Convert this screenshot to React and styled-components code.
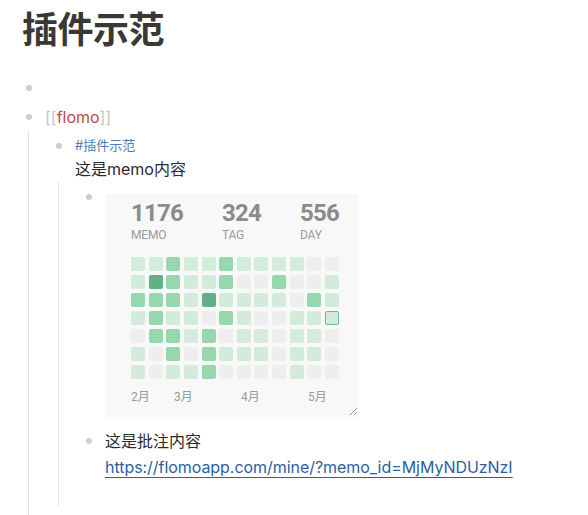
import React from "react";
import styled, { createGlobalStyle } from "styled-components";

const GlobalStyle = createGlobalStyle`
  html, body { margin: 0; padding: 0; background: #ffffff; overflow: hidden; }
  body {
    font-family: Inter, "Noto Sans CJK SC", sans-serif;
    color: #2f2f2f;
    -webkit-font-smoothing: antialiased;
  }
`;

const Page = styled.div`
  padding: 8px 0 0 22px;
  width: 588px;
  height: 515px;
  box-sizing: border-box;
  overflow: hidden;
`;

const Title = styled.h1`
  margin: 0;
  font-size: 36px;
  line-height: 44px;
  font-weight: 700;
  color: #3a3834;
  font-family: Inter, "Noto Sans CJK SC", sans-serif;
  letter-spacing: -0.5px;
`;

const Outline = styled.div`
  margin-top: 21px;
`;

const Block = styled.div`
  display: flex;
  flex-direction: column;
`;

const Row = styled.div`
  display: flex;
  align-items: flex-start;
  gap: 9px;
  padding: 2px 0 1px;
`;

const BulletWrap = styled.div`
  width: 14px;
  height: 26px;
  flex: none;
  display: flex;
  align-items: center;
  justify-content: center;
`;

const Dot = styled.span`
  width: 6px;
  height: 6px;
  border-radius: 50%;
  background: #cdcdcd;
`;

const Content = styled.div`
  display: flex;
  flex-direction: column;
  min-height: 26px;
`;

const Line = styled.div`
  font-size: 16px;
  line-height: ${(p) => p.$lh || 26}px;
  color: #2b2b2b;
  white-space: nowrap;
`;

const Children = styled.div`
  margin-left: 6px;
  border-left: 1px solid #e4e4e4;
  padding-left: 23px;
  padding-bottom: ${(p) => p.$pb || 0}px;
`;

const Bracket = styled.span`
  color: #c4c4c4;
`;

const PageRef = styled.span`
  color: #bd4a4a;
`;

const Tag = styled.span`
  font-size: 13px;
  line-height: 23px;
  color: #4a7db3;
`;

const Link = styled.a`
  color: #2d5f9c;
  text-decoration: underline;
  text-decoration-thickness: 1px;
  text-underline-offset: 4px;
  letter-spacing: -0.05px;
`;

/* ---- flomo card ---- */

const Card = styled.div`
  position: relative;
  margin: 10px 0 8px;
  width: 254px;
  height: 223px;
  box-sizing: border-box;
  background: #f8f8f8;
  padding: 5px 20px 10px 26px;
  font-family: Roboto, "Noto Sans CJK SC", sans-serif;
`;

const Stats = styled.div`
  display: flex;
  justify-content: space-between;
  width: 208px;
`;

const Stat = styled.div`
  display: flex;
  flex-direction: column;
`;

const StatNum = styled.div`
  font-size: 24px;
  line-height: 28px;
  font-weight: 700;
  color: #8b8b8b;
  letter-spacing: -0.8px;
`;

const StatLabel = styled.div`
  font-size: 12px;
  line-height: 16px;
  color: #9a9a9a;
  letter-spacing: -0.2px;
`;

const Heatmap = styled.div`
  margin-top: 14px;
  width: 208px;
  display: grid;
  grid-template-columns: repeat(12, 1fr);
  grid-auto-rows: 14px;
  column-gap: 3.7px;
  row-gap: 4px;
`;

const levelColors = ["#eeeeee", "#d3ebdb", "#97d7ad", "#62b085"];

const Cell = styled.div`
  border-radius: 2px;
  background: ${(p) => levelColors[p.$level]};
  box-sizing: border-box;
  border: ${(p) => (p.$today ? "1px solid #6dbb8a" : "none")};
`;

const Months = styled.div`
  position: relative;
  margin-top: 10px;
  height: 16px;
  width: 208px;
`;

const Month = styled.span`
  position: absolute;
  top: 0;
  left: ${(p) => p.$left}px;
  font-size: 12px;
  line-height: 16px;
  color: #9a9a9a;
`;

const Grip = styled.svg`
  position: absolute;
  right: 1px;
  bottom: 1px;
`;

const rows = [
  [1, 1, 2, 1, 1, 2, 1, 1, 1, 1, 0, 0],
  [1, 3, 2, 1, 1, 2, 0, 0, 2, 0, 0, 1],
  [2, 2, 2, 1, 3, 1, 1, 1, 1, 0, 2, 1],
  [1, 2, 1, 1, 0, 2, 1, 0, 0, 1, 1, 1],
  [0, 2, 2, 1, 2, 0, 1, 1, 0, 1, 1, 0],
  [1, 0, 2, 0, 2, 1, 1, 1, 0, 1, 1, 0],
  [1, 0, 1, 1, 2, 0, 0, 0, 0, 1, 0, 0],
];

const months = [
  { label: "2月", left: 0 },
  { label: "3月", left: 43 },
  { label: "4月", left: 110 },
  { label: "5月", left: 177 },
];

const stats = [
  { num: "1176", label: "MEMO" },
  { num: "324", label: "TAG" },
  { num: "556", label: "DAY" },
];

function FlomoCard() {
  return (
    <Card>
      <Stats>
        {stats.map((s) => (
          <Stat key={s.label}>
            <StatNum>{s.num}</StatNum>
            <StatLabel>{s.label}</StatLabel>
          </Stat>
        ))}
      </Stats>
      <Heatmap>
        {rows.map((r, ri) =>
          r.map((lv, ci) => (
            <Cell key={`${ri}-${ci}`} $level={lv} $today={ri === 3 && ci === 11} />
          ))
        )}
      </Heatmap>
      <Months>
        {months.map((m) => (
          <Month key={m.label} $left={m.left}>
            {m.label}
          </Month>
        ))}
      </Months>
      <Grip width="9" height="9" viewBox="0 0 9 9">
        <line x1="1" y1="8" x2="8" y2="1" stroke="#8a8a8a" strokeWidth="0.9" />
        <line x1="5" y1="8" x2="8" y2="5" stroke="#8a8a8a" strokeWidth="0.9" />
      </Grip>
    </Card>
  );
}

function Bullet() {
  return (
    <BulletWrap>
      <Dot />
    </BulletWrap>
  );
}

export default function App() {
  return (
    <>
      <GlobalStyle />
      <Page>
        <Title>插件示范</Title>
        <Outline>
          <Block>
            <Row>
              <Bullet />
              <Content />
            </Row>
          </Block>
          <Block>
            <Row>
              <Bullet />
              <Content>
                <Line>
                  <Bracket>[[</Bracket>
                  <PageRef>flomo</PageRef>
                  <Bracket>]]</Bracket>
                </Line>
              </Content>
            </Row>
            <Children $pb={40}>
              <Block>
                <Row>
                  <Bullet />
                  <Content>
                    <Line $lh={23}>
                      <Tag>#插件示范</Tag>
                    </Line>
                    <Line $lh={24}>这是memo内容</Line>
                  </Content>
                </Row>
                <Children $pb={25}>
                  <Block>
                    <Row>
                      <Bullet />
                      <FlomoCard />
                    </Row>
                  </Block>
                  <Block>
                    <Row>
                      <Bullet />
                      <Content>
                        <Line>这是批注内容</Line>
                        <Line>
                          <Link href="#">https://flomoapp.com/mine/?memo_id=MjMyNDUzNzI</Link>
                        </Line>
                      </Content>
                    </Row>
                  </Block>
                </Children>
              </Block>
            </Children>
          </Block>
        </Outline>
      </Page>
    </>
  );
}
